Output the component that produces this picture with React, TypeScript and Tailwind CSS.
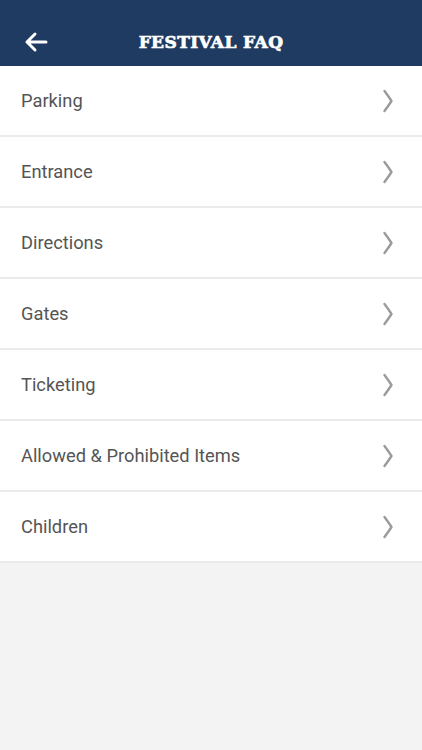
import React from "react";

const items = [
  "Parking",
  "Entrance",
  "Directions",
  "Gates",
  "Ticketing",
  "Allowed & Prohibited Items",
  "Children",
];

function Chevron() {
  return (
    <svg width="12" height="24" viewBox="0 0 12 24" fill="none">
      <path d="M2.5 2 Q7 8 9.5 12 Q7 16 2.5 22" stroke="#9b9b9b" strokeWidth="2.4" strokeLinecap="round" strokeLinejoin="round" />
    </svg>
  );
}

export default function App() {
  return (
    <div className="w-[422px] h-[750px] bg-[#f3f3f3] flex flex-col" style={{ fontFamily: "Roboto, 'Liberation Sans', sans-serif" }}>
      <div className="h-[66px] bg-[#1f3b61] flex items-center relative shrink-0">
        <div className="absolute left-[24px] top-[31px]">
          <svg width="24" height="22" viewBox="0 0 24 22" fill="none">
            <path d="M22 11 H3 M11 3 L3 11 L11 19" stroke="white" strokeWidth="3" strokeLinecap="round" strokeLinejoin="round" />
          </svg>
        </div>
        <div className="flex-1 text-center text-white text-[17px] font-bold pt-[20px] tracking-[0.4px] [-webkit-text-stroke:0.7px_white]" style={{ fontFamily: "'DejaVu Serif', serif" }}>
          FESTIVAL FAQ
        </div>
      </div>
      <div className="flex flex-col bg-white">
        {items.map((t) => (
          <div key={t} className="h-[71px] border-b-2 border-[#ebebeb] flex items-center justify-between pl-[21px] pr-[28px]">
            <span className="text-[18.3px] text-[#555555]">{t}</span>
            <Chevron />
          </div>
        ))}
      </div>
    </div>
  );
}
